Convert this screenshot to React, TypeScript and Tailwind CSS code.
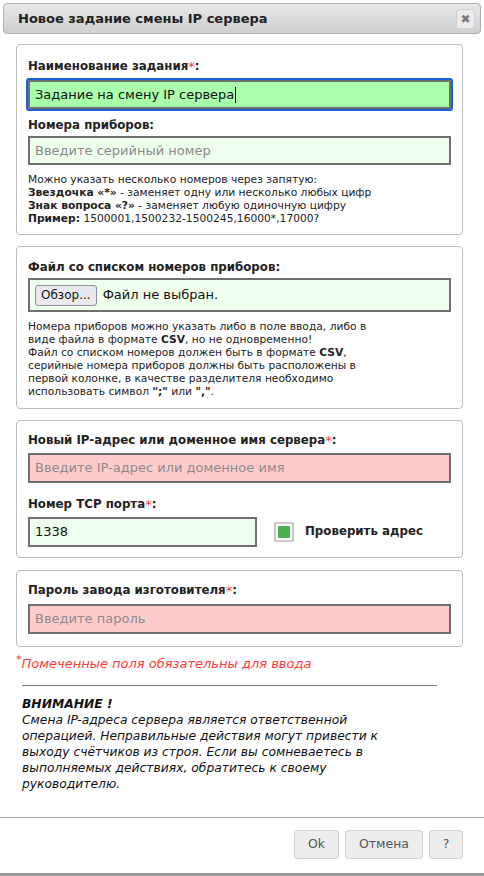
import React from 'react'

const font = "font-['DejaVu_Sans','Verdana',sans-serif]"

function Req() {
  return <sup className="text-[13px] text-[#ff3b3b] font-normal relative top-[1px]">*</sup>
}

function Label({ children, className = '' }: { children: React.ReactNode; className?: string }) {
  return <div className={`text-[11.8px] font-bold leading-[14px] text-[#222] ${className}`}>{children}</div>
}

function Field({
  placeholder,
  value,
  tone,
  className = '',
  focused,
}: {
  placeholder?: string
  value?: string
  tone: 'green' | 'light' | 'red'
  className?: string
  focused?: boolean
}) {
  const bg = tone === 'green' ? 'bg-[#aaffaa]' : tone === 'red' ? 'bg-[#ffcccc]' : 'bg-[#eeffee]'
  return (
    <div
      className={`h-[29px] border-2 border-[#6f6f6f] flex items-center px-[5px] text-[13px] ${bg} ${
        focused ? 'outline-2 outline-[#1c62d4] rounded-[1px]' : ''
      } ${className}`}
    >
      {value ? (
        <span className="text-[#111]">
          {value}
          {focused && <span className="inline-block w-px h-[16px] bg-black align-middle ml-px" />}
        </span>
      ) : (
        <span className="text-[#8a8a8a]">{placeholder}</span>
      )}
    </div>
  )
}

function Section({ children, className = '' }: { children: React.ReactNode; className?: string }) {
  return (
    <div className={`border border-[#bcbcbc] rounded-[4px] px-[11px] ${className}`}>{children}</div>
  )
}

export default function App() {
  return (
    <div className={`w-[484px] h-[876px] bg-white relative ${font} text-[#222] border-b-[3px] border-[#9a9a9a]`}>
      {/* title bar */}
      <div className="mx-[3px] pt-[3px]">
        <div className="h-[31px] rounded-[4px] border border-[#b0b0b0] bg-gradient-to-b from-[#e8e8e8] to-[#cfcfcf] flex items-center justify-between pl-[14px] pr-[5px]">
          <span className="text-[13px] font-bold text-[#222]">Новое задание смены IP сервера</span>
          <button className="w-[19px] h-[20px] rounded-[3px] border border-[#d0d0d0] bg-[#ebebeb] flex items-center justify-center text-[12px] text-[#7a7a7a] leading-none">
            ✖
          </button>
        </div>
      </div>

      <div className="pl-[16px] pr-[21px]">
        {/* task name + serials */}
        <Section className="mt-[10px] pt-[14px] pb-[9px]">
          <Label>
            Наименование задания<Req />:
          </Label>
          <Field tone="green" value="Задание на смену IP сервера" focused className="mt-[7px]" />
          <Label className="mt-[9px]">Номера приборов:</Label>
          <Field tone="light" placeholder="Введите серийный номер" className="mt-[4px]" />
          <div className="mt-[8px] text-[10.7px] leading-[13px]">
            <div>Можно указать несколько номеров через запятую:</div>
            <div>
              <b>Звездочка «*»</b> - заменяет одну или несколько любых цифр
            </div>
            <div>
              <b>Знак вопроса «?»</b> - заменяет любую одиночную цифру
            </div>
            <div>
              <b>Пример:</b> 1500001,1500232-1500245,16000*,17000?
            </div>
          </div>
        </Section>

        {/* file */}
        <Section className="mt-[11px] pt-[13px] pb-[10px]">
          <Label>Файл со списком номеров приборов:</Label>
          <div className="mt-[4px] h-[34px] border-2 border-[#6f6f6f] bg-[#eeffee] flex items-center px-[5px] gap-[6px] text-[13px]">
            <span className="h-[21px] px-[5px] rounded-[3px] border border-[#8f8f9d] bg-[#e9e9ed] flex items-center text-[12px] text-[#111]">
              Обзор...
            </span>
            <span className="text-[#111]">Файл не выбран.</span>
          </div>
          <div className="mt-[8px] text-[10.7px] leading-[13px]">
            Номера приборов можно указать либо в поле ввода, либо в
            <br />
            виде файла в формате <b>CSV</b>, но не одновременно!
            <br />
            Файл со списком номеров должен быть в формате <b>CSV</b>,
            <br />
            серийные номера приборов должны быть расположены в
            <br />
            первой колонке, в качестве разделителя необходимо
            <br />
            использовать символ <b>";"</b> или <b>","</b>.
          </div>
        </Section>

        {/* ip + port */}
        <Section className="mt-[11px] pt-[12px] pb-[10px]">
          <Label>
            Новый IP-адрес или доменное имя сервера<Req />:
          </Label>
          <Field tone="red" placeholder="Введите IP-адрес или доменное имя" className="mt-[6px] h-[30px]" />
          <Label className="mt-[14px]">
            Номер TCP порта<Req />:
          </Label>
          <div className="mt-[6px] flex items-center">
            <Field tone="light" value="1338" className="w-[229px] h-[30px]" />
            <span className="ml-[17px] w-[20px] h-[20px] border-2 border-[#c8c8c8] bg-white flex items-center justify-center">
              <span className="w-[12px] h-[12px] bg-[#4caf50]" />
            </span>
            <span className="ml-[11px] text-[11.8px] font-bold">Проверить адрес</span>
          </div>
        </Section>

        {/* password */}
        <Section className="mt-[12px] pt-[12px] pb-[12px]">
          <Label>
            Пароль завода изготовителя<Req />:
          </Label>
          <Field tone="red" placeholder="Введите пароль" className="mt-[7px] h-[30px]" />
        </Section>

        <div className="mt-[9px] text-[13px] italic text-[#ff3b3b] leading-[16px]">
          <sup className="text-[11px] not-italic">*</sup>Помеченные поля обязательны для ввода
        </div>

        <div className="mt-[13px] ml-[6px] w-[415px] h-px bg-[#777]" />

        <div className="ml-[6px] mt-[10px] text-[12.3px] italic leading-[16px] text-[#111]">
          <div className="font-bold">ВНИМАНИЕ !</div>
          <div>
            Смена IP-адреса сервера является ответственной
            <br />
            операцией. Неправильные действия могут привести к
            <br />
            выходу счётчиков из строя. Если вы сомневаетесь в
            <br />
            выполняемых действиях, обратитесь к своему
            <br />
            руководителю.
          </div>
        </div>
      </div>

      {/* footer */}
      <div className="absolute left-0 right-0 top-[817px] border-t border-[#b0b0b0]">
        <div className="flex justify-end gap-[6px] pr-[21px] pt-[12px]">
          {['Ok', 'Отмена', '?'].map((t) => (
            <button
              key={t}
              className={`h-[29px] rounded-[3px] border border-[#d3d3d3] bg-[#ededed] text-[12.5px] text-[#555] ${
                t === 'Ok' ? 'w-[45px]' : t === '?' ? 'w-[34px]' : 'w-[78px]'
              }`}
            >
              {t}
            </button>
          ))}
        </div>
      </div>
    </div>
  )
}
